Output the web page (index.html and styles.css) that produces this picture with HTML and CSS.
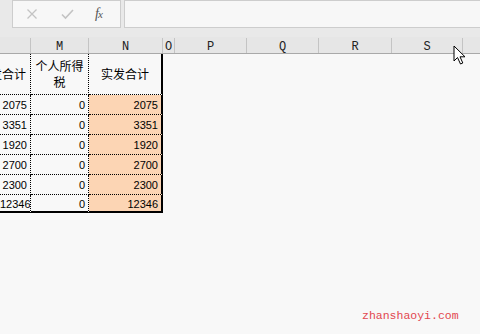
FILE: index.html
```html
<!DOCTYPE html>
<html>
<head>
    <title>Sheet</title>
    <link rel="stylesheet" href="styles.css">
</head>
<body>
    <div class="toolbar">
        <div class="fxbox">
            <svg class="tool" width="12" height="12" viewBox="0 0 12 12"><path d="M1.5 1.5 L10.5 10.5 M10.5 1.5 L1.5 10.5" stroke="#c3c3c3" stroke-width="1.3" fill="none"/></svg>
            <svg class="tool" width="13" height="12" viewBox="0 0 13 12"><path d="M1 6.5 L4.5 10 L12 2" stroke="#c3c3c3" stroke-width="1.6" fill="none"/></svg>
            <span class="fx">f<span class="x">x</span></span>
        </div>
        <div class="formula"></div>
    </div>

    <div class="colheads">
        <div class="ch w-l"></div>
        <div class="ch w-m">M</div>
        <div class="ch w-n">N</div>
        <div class="ch w-o">O</div>
        <div class="ch w-p">P</div>
        <div class="ch w-q">Q</div>
        <div class="ch w-r">R</div>
        <div class="ch w-s">S</div>
        <div class="ch w-t"></div>
    </div>

    <div class="sheet">
        <div class="c head cut">应发合计</div>
        <div class="c head">个人所得税</div>
        <div class="c head net">实发合计</div>

        <div class="c num">2075</div><div class="c num">0</div><div class="c num net pay">2075</div>
        <div class="c num">3351</div><div class="c num">0</div><div class="c num net pay">3351</div>
        <div class="c num">1920</div><div class="c num">0</div><div class="c num net pay">1920</div>
        <div class="c num">2700</div><div class="c num">0</div><div class="c num net pay">2700</div>
        <div class="c num">2300</div><div class="c num">0</div><div class="c num net pay">2300</div>
        <div class="c num last">12346</div><div class="c num last">0</div><div class="c num net pay last">12346</div>
    </div>

    <svg class="cursor" width="14" height="21" viewBox="0 0 14 21">
        <path d="M1 1 L1 16 L4.5 12.5 L7.5 19 L9.8 18 L7 11.8 L12 11.8 Z" fill="#fff" stroke="#000" stroke-width="1" stroke-linejoin="miter"/>
    </svg>

    <div class="watermark">zhanshaoyi.com</div>
</body>
</html>
```

FILE: styles.css
```css
body {
    margin: 0;
    width: 480px;
    height: 334px;
    overflow: hidden;
    position: relative;
    background: #f8f8f8;
    font-family: "Noto Sans CJK SC", sans-serif;
}

/* formula bar */
.toolbar {
    display: flex;
    gap: 3px;
    height: 37px;
    padding-left: 12px;
    background: #e9e9e9;
    box-sizing: border-box;
}
.fxbox, .formula {
    height: 28px;
    box-sizing: border-box;
    border: 1px solid #cdcdcd;
    background: #f7f7f7;
}
.fxbox {
    width: 109px;
    display: flex;
    align-items: center;
    padding-left: 13px;
}
.tool {
    margin-right: 23px;
}
.fx {
    font-family: "Liberation Serif", serif;
    font-style: italic;
    font-size: 14px;
    color: #555;
    margin-left: -2px;
    letter-spacing: -1px;
}
.fx .x {
    font-size: 11px;
}
.formula {
    flex: 1;
    border-right: none;
}

/* column letters */
.colheads {
    display: flex;
    height: 17px;
    background: #e6e6e6;
    border-bottom: 1px solid #a9a9a9;
    box-sizing: border-box;
    padding-top: 1px;
}
.ch {
    box-sizing: border-box;
    border-right: 1px solid #c4c4c4;
    text-align: center;
    font-family: "Liberation Mono", monospace;
    font-size: 12px;
    line-height: 18px;
    color: #222;
}
.w-l { width: 31px; }
.w-m { width: 58px; }
.w-n { width: 74px; }
.w-o { width: 12px; }
.w-p { width: 72px; }
.w-q { width: 72px; }
.w-r { width: 73px; }
.w-s { width: 71px; }
.w-t { flex: 1; border-right: none; }

/* cells */
.sheet {
    display: grid;
    grid-template-columns: 31px 58px 74px;
    width: 163px;
}
.c {
    box-sizing: border-box;
    height: 20px;
    border-right: 1px dotted #000;
    border-bottom: 1px dotted #000;
    font-size: 12px;
    color: #000;
    white-space: nowrap;
    overflow: hidden;
}
.head {
    height: 41px;
    display: flex;
    align-items: center;
    justify-content: center;
    text-align: center;
    white-space: normal;
    line-height: 16px;
}
.cut {
    justify-content: flex-end;
    white-space: nowrap;
    padding-right: 4px;
}
.net {
    border-right: 2px solid #000;
}
.pay {
    background: #fcd5b4;
}
.num {
    font-family: "Liberation Sans", sans-serif;
    font-size: 11px;
    text-align: right;
    padding-right: 3px;
    line-height: 21px;
}
.last {
    height: 18px;
    border-bottom: 2px solid #000;
    line-height: 19px;
}

.cursor {
    position: absolute;
    left: 453px;
    top: 45px;
}

.watermark {
    position: absolute;
    left: 362px;
    top: 309px;
    font-family: "Liberation Mono", monospace;
    font-size: 11.5px;
    color: #e2474f;
}
```
